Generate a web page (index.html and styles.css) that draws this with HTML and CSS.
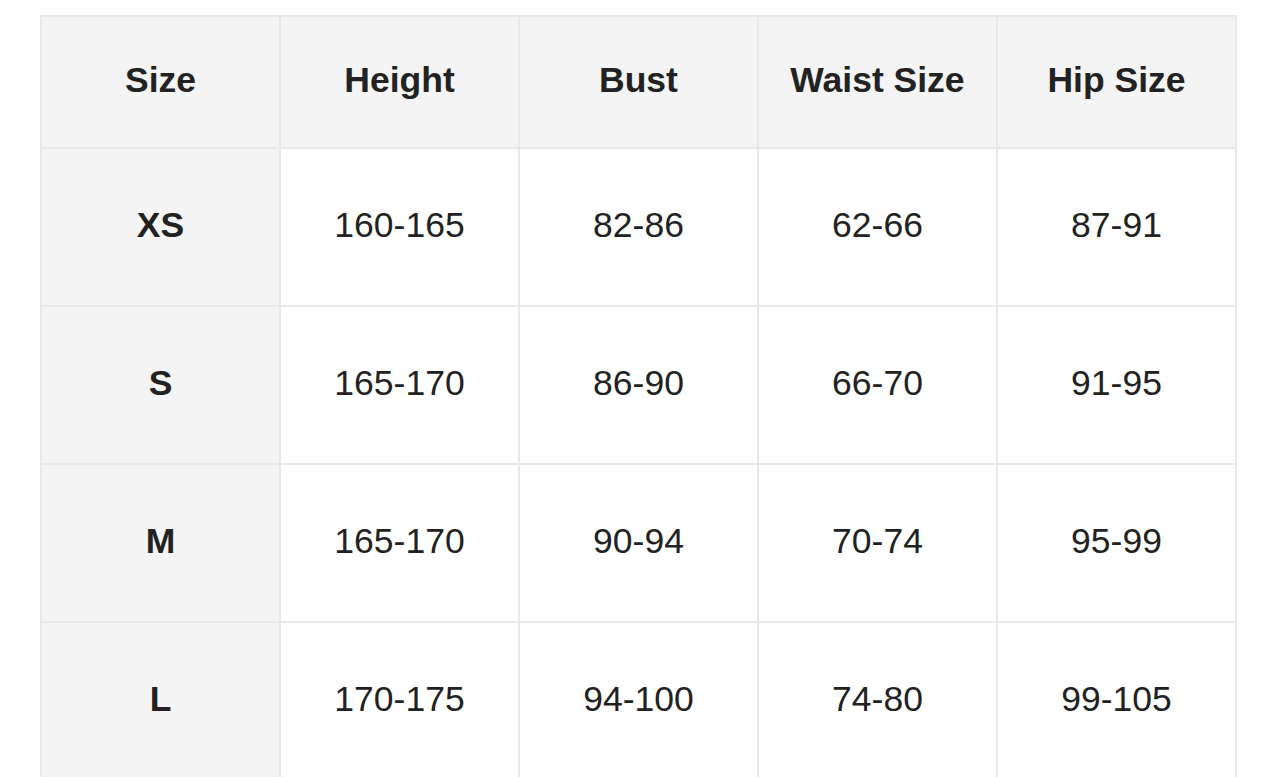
FILE: index.html
```html
<!DOCTYPE html>
<html>
<head>
<meta charset="utf-8">
<link rel="stylesheet" href="styles.css">
</head>
<body>
<div class="chart">
  <div class="cell head">Size</div>
  <div class="cell head">Height</div>
  <div class="cell head">Bust</div>
  <div class="cell head">Waist Size</div>
  <div class="cell head">Hip Size</div>

  <div class="cell size">XS</div>
  <div class="cell">160-165</div>
  <div class="cell">82-86</div>
  <div class="cell">62-66</div>
  <div class="cell">87-91</div>

  <div class="cell size">S</div>
  <div class="cell">165-170</div>
  <div class="cell">86-90</div>
  <div class="cell">66-70</div>
  <div class="cell">91-95</div>

  <div class="cell size">M</div>
  <div class="cell">165-170</div>
  <div class="cell">90-94</div>
  <div class="cell">70-74</div>
  <div class="cell">95-99</div>

  <div class="cell size">L</div>
  <div class="cell">170-175</div>
  <div class="cell">94-100</div>
  <div class="cell">74-80</div>
  <div class="cell">99-105</div>
</div>
</body>
</html>
```
FILE: styles.css
```css
html, body {
  margin: 0;
  padding: 0;
  background: #ffffff;
  overflow: hidden;
}
body {
  padding: 15px 0 0 40px;
  font-family: "Liberation Sans", Arial, Helvetica, sans-serif;
  color: #222222;
}
.chart {
  display: grid;
  grid-template-columns: repeat(5, 237px);
  grid-template-rows: 130px repeat(4, 156px);
  gap: 2px;
  padding: 2px;
  background: #e8e8e8;
  width: max-content;
}
.cell {
  background: #ffffff;
  display: flex;
  align-items: center;
  justify-content: center;
  padding-bottom: 4px;
  font-size: 35.5px;
}
.head {
  background: #f4f4f4;
  font-weight: bold;
}
.size {
  background: #f4f4f4;
  font-weight: bold;
}
```
